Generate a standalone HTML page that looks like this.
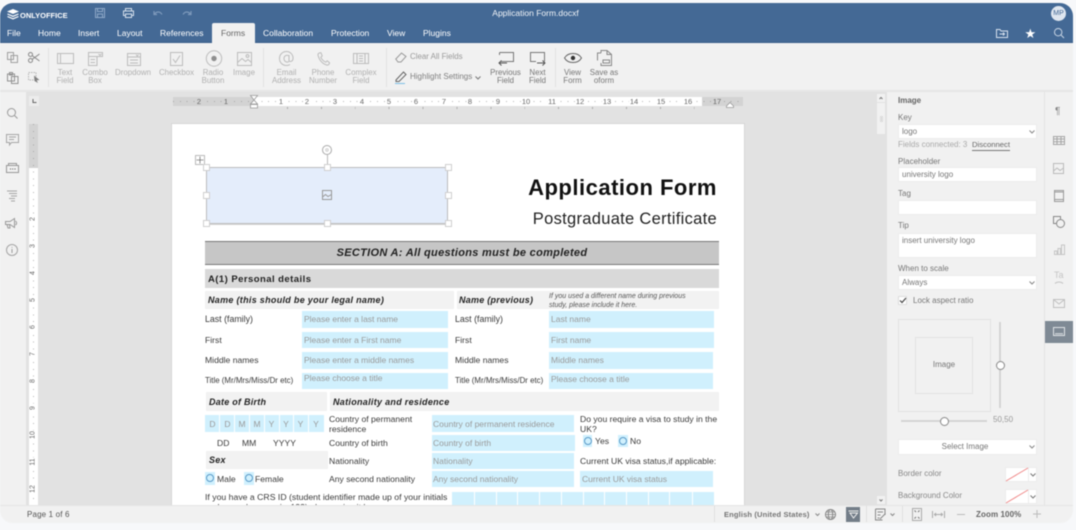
<!DOCTYPE html>
<html lang="en">
<head>
<meta charset="utf-8">
<title>Application Form.docxf</title>
<style>
*{box-sizing:border-box}
html,body{margin:0;padding:0;width:1076px;height:530px;overflow:hidden;background:#f7f8fa}
body{font-family:"Liberation Sans",sans-serif;position:relative}
#root{position:absolute;left:0;top:0;width:1076px;height:530px;overflow:hidden;filter:blur(.5px)}
#win{position:absolute;left:0;top:3px;width:1073px;height:520px;border-radius:13px;overflow:hidden;background:#f1f1f1}
.a{position:absolute}
.t{position:absolute;white-space:nowrap;line-height:1}
.c{transform:translateX(-50%);text-align:center}
svg{position:absolute;overflow:visible;fill:none;stroke-width:1}
.m{color:#fff;font-size:8.5px;top:26px}
.tb{color:#b0b0b0;font-size:7.9px;line-height:8px;white-space:normal;text-align:center;position:absolute;transform:translateX(-50%)}
.tbd{color:#777}
.ic{stroke:#bcbcbc}
.rn{position:absolute;top:1px;font-size:7.5px;line-height:9px;color:#666;transform:translateX(-50%)}
.vn{position:absolute;left:0;width:9px;text-align:center;font-size:7px;line-height:8px;color:#666;transform:rotate(-90deg)}
.f{position:absolute;background:#d0f0fd}
.ft{position:absolute;white-space:nowrap;line-height:1;font-size:8.5px;color:#9a9a9a}
.l{position:absolute;white-space:nowrap;line-height:1;font-size:8.6px;color:#3a3a3a}
.g{position:absolute;background:#f2f2f2}
.bi{position:absolute;white-space:nowrap;line-height:1;font-weight:bold;font-style:italic;font-size:9px;color:#222;letter-spacing:.25px}
.h{position:absolute;width:7px;height:7px;background:#fff;border:1px solid #cfcfcf}
.pl{position:absolute;white-space:nowrap;line-height:1;font-size:8px;color:#777}
.in{position:absolute;left:898px;width:139px;background:#fff;border:1px solid #ececec}
.iv{position:absolute;left:3px;top:3px;font-size:8px;line-height:1;color:#777;white-space:nowrap}
</style>
</head>
<body>
<div id="root">
<div id="win">

<!-- header -->
<div class="a" style="left:0;top:0;width:1073px;height:40px;background:#446995;border-bottom:1px solid #3b5f8a"></div>
<svg style="left:6px;top:5px" width="14" height="12" viewBox="0 0 14 12"><path d="M7 1 L13 3.5 L7 6 L1 3.5Z" fill="#fff"/><path d="M1.5 6 L7 8.3 L12.5 6M1.5 8.5 L7 10.8 L12.5 8.5" stroke="#fff" stroke-width="1.2"/></svg>
<div class="t" style="left:20px;top:9px;color:#fff;font-size:7.5px;font-weight:bold">ONLYOFFICE</div>
<svg style="left:95px;top:5px" width="10" height="10"><path d="M.5.5H9.5V9.5H.5ZM2.5.5V3.5H7.5V.5M2.5 9.5V6H7.5V9.5" stroke="#8fa9c8"/></svg>
<svg style="left:123px;top:5px" width="11" height="10"><path d="M2.5 3V.5H8.5V3M2.5 7.5H.5V3H10.5V7.5H8.5M2.5 6H8.5V9.5H2.5Z" stroke="#d5e0ec"/></svg>
<svg style="left:153px;top:7px" width="10" height="6"><path d="M1 1V4.5H4M1.5 4C3.5 1.5 7 1 9 4.5" stroke="#7d99bb" stroke-width="1.2"/></svg>
<svg style="left:182px;top:7px" width="10" height="6"><path d="M9 1V4.5H6M8.5 4C6.5 1.5 3 1 1 4.5" stroke="#7d99bb" stroke-width="1.2"/></svg>
<div class="t c" style="left:535.5px;top:6px;color:#f1f4f8;font-size:8.5px">Application Form.docxf</div>
<div class="a" style="left:1051px;top:3px;width:15px;height:15px;border-radius:50%;background:#dfe6ef"></div>
<div class="t c" style="left:1058.5px;top:7px;color:#446995;font-size:7px">MP</div>

<div class="t m" style="left:7px">File</div>
<div class="t m" style="left:38px">Home</div>
<div class="t m" style="left:78px">Insert</div>
<div class="t m" style="left:117px">Layout</div>
<div class="t m" style="left:160px">References</div>
<div class="a" style="left:212px;top:20px;width:43px;height:21px;background:#f1f1f1;border-radius:2px 2px 0 0"></div>
<div class="t" style="left:221px;top:26px;font-size:8.5px;color:#666">Forms</div>
<div class="t m" style="left:263px">Collaboration</div>
<div class="t m" style="left:331px">Protection</div>
<div class="t m" style="left:387px">View</div>
<div class="t m" style="left:423px">Plugins</div>
<svg style="left:996px;top:26px" width="12" height="9"><path d="M.5 8.5V.5H4L5 2H11.5V8.5ZM3.5 5H8.5M7 3.5L8.5 5 7 6.5" stroke="#d7e1ee"/></svg>
<div class="t" style="left:1024.5px;top:24px;color:#fff;font-size:13px">★</div>
<svg style="left:1054px;top:25px" width="10" height="10"><circle cx="4.2" cy="4.2" r="3.7" stroke="#c9d6e5"/><path d="M7 7L10 10" stroke="#c9d6e5"/></svg>

<!-- toolbar -->
<div class="a" style="left:0;top:40px;width:1073px;height:48px;background:#f1f1f1;border-bottom:1px solid #e5e5e5"></div>
<svg style="left:7px;top:49px" width="12" height="11"><path d="M.5.5H6.5V7.5H.5ZM4 3.5H10.5V10.5H4Z" stroke="#a0a0a0"/></svg>
<svg style="left:28px;top:49px" width="12" height="11"><circle cx="2.5" cy="2.5" r="2" stroke="#888"/><circle cx="2.5" cy="8.5" r="2" stroke="#888"/><path d="M4 3.5L11.5 9M4 7.5L11.5 2" stroke="#888"/></svg>
<svg style="left:7px;top:69px" width="12" height="12"><path d="M.5 2H7.5V9H.5ZM2.5 .5H5.5V3H2.5ZM4.5 4.5H11V11.5H4.5Z" stroke="#929292"/></svg>
<svg style="left:28px;top:69px" width="12" height="11"><path d="M.5 .5H8V8H.5Z" stroke="#b5b5b5" stroke-dasharray="1.5 1"/><path d="M6 3.5L11.5 8 8.7 8.3 10 11 6.5 9Z" fill="#808080" stroke="none"/></svg>
<div class="a" style="left:48px;top:45px;width:1px;height:39px;background:#e2e2e2"></div>

<svg style="left:57px;top:50px" width="17" height="11"><path d="M.5.5H16.5V10.5H.5ZM3.5.5V10.5M1.5.5H5.5M1.5 10.5H5.5" class="ic"/></svg>
<div class="tb" style="left:65px;top:66px;width:24px">Text<br>Field</div>
<svg style="left:88px;top:49px" width="15" height="14"><path d="M.5 4.5H9V13.5H.5ZM.5 4.5V.5H14.5V4.5H9M2.5 7.5H7M2.5 10.5H7M10.5 2L12 3.3 13.5 2" class="ic"/></svg>
<div class="tb" style="left:95px;top:66px;width:32px">Combo<br>Box</div>
<svg style="left:127px;top:50px" width="14" height="13"><path d="M.5.5H13.5V12.5H.5ZM.5 4H13.5M3 7H11M3 10H11M9 1.7L10.3 3 11.6 1.7" class="ic"/></svg>
<div class="tb" style="left:133px;top:66px;width:44px">Dropdown</div>
<svg style="left:170px;top:49px" width="13" height="14"><path d="M.5.5H12.5V13.5H.5ZM3 7L5.5 10.5 10 3.5" class="ic"/></svg>
<div class="tb" style="left:176.5px;top:66px;width:44px">Checkbox</div>
<svg style="left:206px;top:47px" width="16" height="17"><circle cx="8" cy="8.5" r="7.7" class="ic"/><circle cx="8" cy="8.5" r="2.7" fill="#8f8f8f"/></svg>
<div class="tb" style="left:213px;top:66px;width:32px">Radio<br>Button</div>
<svg style="left:237px;top:49px" width="15" height="14"><path d="M.5.5H14.5V13.5H.5ZM.5 10.5L5 6.5 8.5 9.5 11 7.5 14.5 10.5" class="ic"/><circle cx="10.5" cy="4" r="1.4" class="ic"/></svg>
<div class="tb" style="left:244px;top:66px;width:32px">Image</div>
<div class="a" style="left:263px;top:45px;width:1px;height:39px;background:#e2e2e2"></div>
<svg style="left:279px;top:48px" width="15" height="15"><path d="M10 10.5C8 12 5 10.5 5 7.5S8 3.5 10 5M10 4V9.5C10 11 13.5 11 14 8 14.5 3.5 11 .5 7.5.5 3.5.5.5 3.5.5 7.5S3.5 14.5 7.5 14.5C9 14.5 10 14.2 11 13.5" class="ic"/></svg>
<div class="tb" style="left:286.5px;top:66px;width:34px">Email<br>Address</div>
<svg style="left:317px;top:49px" width="13" height="14"><path d="M1 3C.5 1.5 3 .5 4 .8L5.2 4 3.8 5.3C4.8 7.5 6.5 9.2 8.8 10.2L10.2 8.8 12.5 10.7C12.5 12.2 11 13.5 9.7 13C5.2 11.7 2 7.7 1 3Z" class="ic"/></svg>
<div class="tb" style="left:323px;top:66px;width:34px">Phone<br>Number</div>
<svg style="left:353px;top:50px" width="16" height="11"><path d="M.5.5H15.5V10.5H.5ZM4 .5V10.5M12 .5V10.5M6 3H10M6 5.5H10M6 8H10" class="ic"/></svg>
<div class="tb" style="left:361px;top:66px;width:38px">Complex<br>Field</div>
<div class="a" style="left:386px;top:45px;width:1px;height:39px;background:#e2e2e2"></div>
<svg style="left:395px;top:49px" width="12" height="11"><path d="M.8 7L6.5 1 11 4.5 6 10H3Z" stroke="#999"/></svg>
<div class="t" style="left:410px;top:50px;font-size:7.9px;color:#999">Clear All Fields</div>
<svg style="left:395px;top:68px" width="12" height="14"><path d="M1 9L8.5 1 11 3.5 4 10.5H1Z" stroke="#666"/><path d="M0 12.5H10" stroke="#7dbfe6"/></svg>
<div class="t" style="left:410px;top:70px;font-size:8px;color:#808080">Highlight Settings</div>
<svg style="left:475px;top:73px" width="6" height="4"><path d="M.5.5L3 3 5.5.5" stroke="#777"/></svg>
<svg style="left:498px;top:49px" width="16" height="14"><path d="M1.5 .5H15.5V9.5H3" stroke="#777"/><path d="M1.5 .5V3" stroke="#777"/><path d="M1 11H9M3.5 8.5L1 11 3.5 13.5" stroke="#555"/></svg>
<div class="tb tbd" style="left:505.5px;top:66px;width:36px">Previous<br>Field</div>
<svg style="left:530px;top:49px" width="16" height="14"><path d="M14.5 9.5V.5H.5V9.5H6" stroke="#777"/><path d="M7 11H15M12.5 8.5L15 11 12.5 13.5" stroke="#555"/></svg>
<div class="tb tbd" style="left:537.5px;top:66px;width:30px">Next<br>Field</div>
<div class="a" style="left:555px;top:45px;width:1px;height:39px;background:#e2e2e2"></div>
<svg style="left:564px;top:49px" width="18" height="12"><path d="M.5 6C4 0 14 0 17.5 6 14 12 4 12 .5 6Z" stroke="#666"/><circle cx="9" cy="6" r="2.2" fill="#333"/></svg>
<div class="tb tbd" style="left:572.5px;top:66px;width:30px">View<br>Form</div>
<svg style="left:597px;top:47px" width="15" height="16"><path d="M4 3V.5H10L14.5 4.5V15.5H4V13M10 .5V4.5H14.5M4 3H.5V10.5M6 10H12.5V13H6Z" stroke="#888"/></svg>
<div class="tb tbd" style="left:604px;top:66px;width:36px">Save as<br>oform</div>

<!-- left sidebar -->
<div class="a" style="left:0;top:88px;width:26px;height:414px;background:#f1f1f1"></div>
<svg style="left:7px;top:105px" width="11" height="11"><circle cx="4.5" cy="4.5" r="4" stroke="#999"/><path d="M7.5 7.5L10.5 10.5" stroke="#999"/></svg>
<svg style="left:6px;top:131px" width="13" height="12"><path d="M.5.5H12.5V8.5H5.5L3.5 11V8.5H.5ZM3 3H10M3 5.5H8" stroke="#a5a5a5"/></svg>
<svg style="left:6px;top:160px" width="13" height="11"><path d="M2.5 2.5V.5H10.5V2.5M.5 2.5H12.5V9.5H.5Z" stroke="#989898"/><path d="M4 6H5M6.2 6H7.2M8.5 6H9.5" stroke="#555"/></svg>
<svg style="left:6px;top:187px" width="12" height="12"><path d="M1 1H11M3 3.5H11M5 6H11M3 8.5H9M5 11H9" stroke="#a5a5a5"/></svg>
<svg style="left:5px;top:215px" width="14" height="11"><path d="M.5 3.5H5L9.5.5V9.5L5 6.5H.5Z" stroke="#999"/><path d="M2 6.5L3 10H5L4.5 6.5M10.5 3C12 4 12 6 10.5 7" stroke="#999"/></svg>
<svg style="left:6px;top:241px" width="12" height="12"><circle cx="6" cy="6" r="5.5" stroke="#a5a5a5"/><path d="M6 3V3.8M6 5V9" stroke="#999"/></svg>

<!-- canvas -->
<div class="a" style="left:26px;top:88px;width:847px;height:414px;background:#e2e2e2;overflow:hidden">
<div class="a" style="left:3px;top:5px;width:10px;height:10px;background:#ececec"></div>
<svg style="left:6px;top:8px" width="5" height="5"><path d="M1 0V3.5H4.5" stroke="#666"/></svg>

<div class="a" style="left:147px;top:6px;width:570px;height:9px;background:#d3d3d3">
  <div class="a" style="left:81px;top:0;width:448px;height:9px;background:#fff"></div>
  <div class="a" style="left:0;top:4px;width:570px;height:1px;background:repeating-linear-gradient(90deg,#888 0 1px,transparent 1px 6.8px);opacity:.6"></div>
  <span class="rn" style="left:26px;top:0;background:#d3d3d3;padding:0 1px">2</span><span class="rn" style="left:53px;top:0;background:#d3d3d3;padding:0 1px">1</span>
  <span class="rn" style="left:108px;top:0;background:#fff;padding:0 1px">1</span><span class="rn" style="left:134px;top:0;background:#fff;padding:0 1px">2</span><span class="rn" style="left:162px;top:0;background:#fff;padding:0 1px">3</span><span class="rn" style="left:189px;top:0;background:#fff;padding:0 1px">4</span><span class="rn" style="left:216px;top:0;background:#fff;padding:0 1px">5</span><span class="rn" style="left:243px;top:0;background:#fff;padding:0 1px">6</span><span class="rn" style="left:271px;top:0;background:#fff;padding:0 1px">7</span><span class="rn" style="left:297px;top:0;background:#fff;padding:0 1px">8</span><span class="rn" style="left:325px;top:0;background:#fff;padding:0 1px">9</span><span class="rn" style="left:353px;top:0;background:#fff;padding:0 1px">10</span><span class="rn" style="left:379px;top:0;background:#fff;padding:0 1px">11</span><span class="rn" style="left:407px;top:0;background:#fff;padding:0 1px">12</span><span class="rn" style="left:434px;top:0;background:#fff;padding:0 1px">13</span><span class="rn" style="left:461px;top:0;background:#fff;padding:0 1px">14</span><span class="rn" style="left:488px;top:0;background:#fff;padding:0 1px">15</span><span class="rn" style="left:515px;top:0;background:#fff;padding:0 1px">16</span><span class="rn" style="left:544px;top:0;background:#d3d3d3;padding:0 1px">17</span>
</div>
<div class="a" style="left:228px;top:16px;width:448px;height:2px;background:repeating-linear-gradient(90deg,transparent 0 33px,#aaa 33px 33.9px)"></div>
<svg style="left:224px;top:4px" width="9" height="14"><path d="M.5.5H7.5L4 5ZM4 5L.5 9H7.5ZM.5 9.5H7.5V13H.5Z" fill="#fff" stroke="#999" stroke-width=".8"/></svg>
<svg style="left:700px;top:11px" width="8" height="6"><path d="M4 .5L7.5 4V5.5H.5V4Z" fill="#fff" stroke="#999" stroke-width=".8"/></svg>

<div class="a" style="left:3px;top:33px;width:9px;height:381px;background:#fff">
  <div class="a" style="left:0;top:0;width:9px;height:44px;background:#d3d3d3"></div>
  <div class="a" style="left:4px;top:0;width:1px;height:381px;background:repeating-linear-gradient(180deg,#888 0 1px,transparent 1px 6.8px);opacity:.6"></div>
  <span class="vn" style="top:91px;background:#fff">2</span><span class="vn" style="top:118px;background:#fff">3</span><span class="vn" style="top:145px;background:#fff">4</span><span class="vn" style="top:172px;background:#fff">5</span><span class="vn" style="top:199px;background:#fff">6</span><span class="vn" style="top:226px;background:#fff">7</span><span class="vn" style="top:253px;background:#fff">8</span><span class="vn" style="top:280px;background:#fff">9</span><span class="vn" style="top:307px;background:#fff">10</span><span class="vn" style="top:334px;background:#fff">11</span><span class="vn" style="top:361px;background:#fff">12</span>
</div>
</div>

<!-- page -->
<div class="a" style="left:0;top:88px;width:873px;height:414px;overflow:hidden">
<div class="a" style="left:0;top:-91px;width:873px;height:505px">
<div class="a" style="left:172px;top:124px;width:572px;height:381px;background:#fff;box-shadow:0 0 0 1px #d6d6d6"></div>

<div class="a" style="left:195px;top:155px;width:10px;height:10px;background:#fff;border:1px solid #bbb"></div>
<svg style="left:196px;top:156px" width="8" height="8"><path d="M4 .5V7.5M.5 4H7.5" stroke="#777" stroke-width=".8"/></svg>
<div class="a" style="left:206px;top:167px;width:242px;height:57px;background:#e4edfb;border:1px solid #bdbdbd;box-shadow:0 1px 0 #d5d5d5"></div>
<div class="a" style="left:327px;top:155px;width:1px;height:12px;background:#bbb"></div>
<svg style="left:321px;top:144px" width="12" height="12"><circle cx="6" cy="6" r="4.5" fill="#fff" stroke="#aaa"/><circle cx="6" cy="6" r="1.2" stroke="#ccc"/></svg>
<div class="h" style="left:203px;top:164px"></div><div class="h" style="left:324px;top:164px"></div><div class="h" style="left:445px;top:164px"></div>
<div class="h" style="left:203px;top:192px"></div><div class="h" style="left:445px;top:192px"></div>
<div class="h" style="left:203px;top:220px"></div><div class="h" style="left:324px;top:220px"></div><div class="h" style="left:445px;top:220px"></div>
<svg style="left:322px;top:190px" width="10" height="10"><path d="M.5.5H9.5V9.5H.5ZM.5 7L3.5 4.5 6 6.5 9.5 4.5" stroke="#999"/></svg>

<div class="t" style="right:156px;top:177px;font-size:22px;font-weight:bold;color:#111;letter-spacing:.5px">Application Form</div>
<div class="t" style="right:156px;top:211px;font-size:16.5px;color:#222;letter-spacing:.3px">Postgraduate Certificate</div>

<div class="a" style="left:205px;top:241px;width:514px;height:24px;background:#c6c6c6;border-top:1px solid #777;border-bottom:1px solid #777"></div>
<div class="t c" style="left:462px;top:248px;font-size:11px;font-weight:bold;font-style:italic;color:#222;letter-spacing:.3px">SECTION A: All questions must be completed</div>
<div class="a" style="left:205px;top:269px;width:514px;height:19px;background:#d9d9d9"></div>
<div class="t" style="left:208px;top:275px;font-size:9.5px;font-weight:bold;color:#222;letter-spacing:.45px">A(1) Personal details</div>

<div class="g" style="left:205px;top:291px;width:249px;height:18px"></div>
<div class="g" style="left:457px;top:291px;width:262px;height:18px"></div>
<div class="bi" style="left:208px;top:295.5px;letter-spacing:.3px">Name (this should be your legal name)</div>
<div class="bi" style="left:459px;top:295.5px">Name (previous)</div>
<div class="t" style="left:549px;top:292px;font-size:7px;font-style:italic;line-height:9px;color:#555;white-space:nowrap">If you used a different name during previous<br>study, please include it here.</div>

<div class="l" style="left:205px;top:315px;font-size:8.8px">Last (family)</div>
<div class="f" style="left:302px;top:311px;width:146px;height:17px"></div><div class="ft" style="left:304px;top:315px">Please enter a last name</div>
<div class="l" style="left:455px;top:315px;font-size:8.8px">Last (family)</div>
<div class="f" style="left:549px;top:311px;width:165px;height:17px"></div><div class="ft" style="left:551px;top:315px">Last name</div>

<div class="l" style="left:205px;top:336px">First</div>
<div class="f" style="left:302px;top:332px;width:146px;height:16px"></div><div class="ft" style="left:304px;top:336px">Please enter a First name</div>
<div class="l" style="left:455px;top:336px">First</div>
<div class="f" style="left:549px;top:332px;width:165px;height:16px"></div><div class="ft" style="left:551px;top:336px">First name</div>

<div class="l" style="left:205px;top:356px">Middle names</div>
<div class="f" style="left:302px;top:352px;width:146px;height:17px"></div><div class="ft" style="left:304px;top:356px">Please enter a middle names</div>
<div class="l" style="left:455px;top:356px">Middle names</div>
<div class="f" style="left:549px;top:352px;width:164px;height:17px"></div><div class="ft" style="left:551px;top:356px">Middle names</div>

<div class="l" style="left:205px;top:377px;font-size:7.9px">Title (Mr/Mrs/Miss/Dr etc)</div>
<div class="f" style="left:302px;top:373px;width:146px;height:16px"></div><div class="ft" style="left:304px;top:374px">Please choose a title</div>
<div class="l" style="left:455px;top:377px;font-size:7.9px">Title (Mr/Mrs/Miss/Dr etc)</div>
<div class="f" style="left:549px;top:373px;width:164px;height:16px"></div><div class="ft" style="left:551px;top:375px">Please choose a title</div>

<div class="g" style="left:206px;top:392px;width:121px;height:19px"></div>
<div class="g" style="left:330px;top:392px;width:389px;height:19px"></div>
<div class="bi" style="left:209px;top:398px">Date of Birth</div>
<div class="bi" style="left:333px;top:398px;letter-spacing:.3px">Nationality and residence</div>

<div class="f" style="left:205px;top:415px;width:119px;height:17px"></div>
<div class="a" style="left:219px;top:415px;width:1px;height:17px;background:#fff"></div><div class="a" style="left:234px;top:415px;width:1px;height:17px;background:#fff"></div><div class="a" style="left:249px;top:415px;width:1px;height:17px;background:#fff"></div><div class="a" style="left:264px;top:415px;width:1px;height:17px;background:#fff"></div><div class="a" style="left:279px;top:415px;width:1px;height:17px;background:#fff"></div><div class="a" style="left:293px;top:415px;width:1px;height:17px;background:#fff"></div><div class="a" style="left:308px;top:415px;width:1px;height:17px;background:#fff"></div>
<div class="ft c" style="left:212.5px;top:420px">D</div><div class="ft c" style="left:227.5px;top:420px">D</div><div class="ft c" style="left:242px;top:420px">M</div><div class="ft c" style="left:257px;top:420px">M</div><div class="ft c" style="left:271.5px;top:420px">Y</div><div class="ft c" style="left:286px;top:420px">Y</div><div class="ft c" style="left:300.5px;top:420px">Y</div><div class="ft c" style="left:316px;top:420px">Y</div>
<div class="l" style="left:217px;top:439px">DD</div><div class="l" style="left:242px;top:439px">MM</div><div class="l" style="left:273px;top:439px">YYYY</div>
<div class="g" style="left:206px;top:451px;width:122px;height:18px"></div>
<div class="bi" style="left:209px;top:456px">Sex</div>
<div class="f" style="left:205px;top:472px;width:10px;height:13px"></div><div class="a" style="left:206px;top:474px;width:8px;height:8px;border:1px solid #5a9ac8;border-radius:50%"></div>
<div class="l" style="left:217px;top:475px">Male</div>
<div class="f" style="left:244px;top:472px;width:10px;height:13px"></div><div class="a" style="left:245px;top:474px;width:8px;height:8px;border:1px solid #5a9ac8;border-radius:50%"></div>
<div class="l" style="left:255px;top:475px">Female</div>

<div class="l" style="left:329px;top:415px;line-height:9.5px">Country of permanent<br>residence</div>
<div class="f" style="left:432px;top:415px;width:142px;height:17px"></div><div class="ft" style="left:433px;top:420px">Country of permanent residence</div>
<div class="l" style="left:329px;top:439px">Country of birth</div>
<div class="f" style="left:432px;top:435px;width:143px;height:16px"></div><div class="ft" style="left:433px;top:439px">Country of birth</div>
<div class="l" style="left:329px;top:457px">Nationality</div>
<div class="f" style="left:432px;top:453px;width:142px;height:16px"></div><div class="ft" style="left:433px;top:457px">Nationality</div>
<div class="l" style="left:329px;top:475px">Any second nationality</div>
<div class="f" style="left:432px;top:471px;width:142px;height:16px"></div><div class="ft" style="left:433px;top:475px">Any second nationality</div>

<div class="l" style="left:580px;top:415px;line-height:9.5px">Do you require a visa to study in the<br>UK?</div>
<div class="f" style="left:583px;top:435px;width:9px;height:12px"></div><div class="a" style="left:583.5px;top:437px;width:8px;height:8px;border:1px solid #5a9ac8;border-radius:50%"></div>
<div class="l" style="left:595px;top:437px">Yes</div>
<div class="f" style="left:618px;top:435px;width:10px;height:12px"></div><div class="a" style="left:619px;top:437px;width:8px;height:8px;border:1px solid #5a9ac8;border-radius:50%"></div>
<div class="l" style="left:630px;top:437px">No</div>
<div class="l" style="left:580px;top:457px">Current UK visa status,if applicable:</div>
<div class="f" style="left:580px;top:471px;width:133px;height:16px"></div><div class="ft" style="left:582px;top:475px">Current UK visa status</div>

<div class="a" style="left:205px;top:492px;width:245px;height:13px;overflow:hidden"><div class="l" style="left:0;top:1px;line-height:9.5px;font-size:8.7px">If you have a CRS ID (student identifier made up of your initials<br>and a number, e.g. jcs123) please give it here.</div></div>
<div class="f" style="left:452px;top:492px;width:262px;height:13px"></div>
<div class="a" style="left:474px;top:492px;width:1px;height:13px;background:#fff"></div><div class="a" style="left:496px;top:492px;width:1px;height:13px;background:#fff"></div><div class="a" style="left:517px;top:492px;width:1px;height:13px;background:#fff"></div><div class="a" style="left:539px;top:492px;width:1px;height:13px;background:#fff"></div><div class="a" style="left:561px;top:492px;width:1px;height:13px;background:#fff"></div><div class="a" style="left:583px;top:492px;width:1px;height:13px;background:#fff"></div><div class="a" style="left:604px;top:492px;width:1px;height:13px;background:#fff"></div><div class="a" style="left:626px;top:492px;width:1px;height:13px;background:#fff"></div><div class="a" style="left:648px;top:492px;width:1px;height:13px;background:#fff"></div><div class="a" style="left:669px;top:492px;width:1px;height:13px;background:#fff"></div><div class="a" style="left:692px;top:492px;width:1px;height:13px;background:#fff"></div>
</div>
</div>

<!-- scrollbar -->
<div class="a" style="left:873px;top:88px;width:14px;height:414px;background:#e2e2e2"></div>
<div class="a" style="left:877px;top:91px;width:8px;height:8px;background:#f1f1f1"></div>
<svg style="left:879px;top:94px" width="4" height="3"><path d="M.5 2L2 .5 3.5 2" stroke="#777"/></svg>
<div class="a" style="left:877px;top:100px;width:8px;height:31px;background:#f1f1f1"></div>
<div class="a" style="left:880px;top:113px;width:3px;height:6px;background:#ddd"></div>
<div class="a" style="left:877px;top:493px;width:8px;height:8px;background:#f1f1f1"></div>
<svg style="left:879px;top:496px" width="4" height="3"><path d="M.5 .5L2 2 3.5 .5" stroke="#777"/></svg>

<!-- right panel -->
<div class="a" style="left:887px;top:88px;width:186px;height:414px;background:#f1f1f1"></div>
<div class="a" style="left:1044px;top:88px;width:1px;height:414px;background:#e4e4e4"></div>
<div class="a" style="left:0;top:88px;width:1073px;height:1px;background:#e6e6e6"></div>

<div style="position:absolute;left:0;top:-3px;width:1073px;height:523px">
<div class="pl" style="left:898px;top:97px;font-weight:bold;color:#666">Image</div>
<div class="pl" style="left:898px;top:114px">Key</div>
<div class="in" style="top:124px;height:15px"><span class="iv">logo</span></div>
<svg style="left:1029px;top:130px" width="6" height="4"><path d="M.5.5L3 3 5.5.5" stroke="#888"/></svg>
<div class="pl" style="left:898px;top:141px;color:#aaa">Fields connected: 3</div>
<div class="pl" style="left:972px;top:141px;color:#666;font-size:7.7px;border-bottom:1px solid #777;padding-bottom:1px">Disconnect</div>
<div class="pl" style="left:898px;top:158px">Placeholder</div>
<div class="in" style="top:167px;height:15px"><span class="iv">university logo</span></div>
<div class="pl" style="left:898px;top:190px">Tag</div>
<div class="in" style="top:200px;height:15px"></div>
<div class="pl" style="left:898px;top:222px">Tip</div>
<div class="in" style="top:233px;height:25px"><span class="iv">insert university logo</span></div>
<div class="pl" style="left:898px;top:265px">When to scale</div>
<div class="in" style="top:275px;height:15px"><span class="iv">Always</span></div>
<svg style="left:1029px;top:281px" width="6" height="4"><path d="M.5.5L3 3 5.5.5" stroke="#888"/></svg>
<div class="a" style="left:898px;top:296px;width:9px;height:9px;background:#fff;border:1px solid #ddd"></div>
<svg style="left:899px;top:297px" width="8" height="7"><path d="M1 3.5L3 5.5 7 1" stroke="#444" stroke-width="1.2"/></svg>
<div class="pl" style="left:913px;top:297px">Lock aspect ratio</div>

<div class="a" style="left:898px;top:319px;width:93px;height:93px;border:1px solid #e2e2e2"></div>
<div class="a" style="left:915px;top:337px;width:58px;height:57px;border:1px solid #e2e2e2"></div>
<div class="pl c" style="left:944px;top:361px">Image</div>
<div class="a" style="left:999px;top:322px;width:2px;height:86px;background:#d5d5d5"></div>
<div class="a" style="left:996px;top:361px;width:9px;height:9px;border-radius:50%;background:#fff;border:1px solid #888"></div>
<div class="a" style="left:901px;top:420px;width:86px;height:2px;background:#d5d5d5"></div>
<div class="a" style="left:940px;top:417px;width:9px;height:9px;border-radius:50%;background:#fff;border:1px solid #888"></div>
<div class="pl" style="left:993px;top:416px;color:#999">50,50</div>
<div class="in" style="top:439px;height:16px"></div>
<div class="pl c" style="left:965px;top:443px">Select Image</div>
<svg style="left:1029px;top:445px" width="6" height="4"><path d="M.5.5L3 3 5.5.5" stroke="#888"/></svg>

<div class="pl" style="left:898px;top:470px;color:#888">Border color</div>
<div class="a" style="left:1005px;top:467px;width:32px;height:15px;background:#fff;border:1px solid #ececec"></div>
<div class="a" style="left:1028px;top:467px;width:1px;height:15px;background:#ececec"></div>
<svg style="left:1006px;top:468px" width="22" height="13"><path d="M0 13L22 0" stroke="#f08a8a"/></svg>
<svg style="left:1030px;top:473px" width="6" height="4"><path d="M.5.5L3 3 5.5.5" stroke="#777"/></svg>
<div class="pl" style="left:898px;top:492px;color:#888">Background Color</div>
<div class="a" style="left:1005px;top:489px;width:32px;height:15px;background:#fff;border:1px solid #ececec"></div>
<div class="a" style="left:1028px;top:489px;width:1px;height:15px;background:#ececec"></div>
<svg style="left:1006px;top:490px" width="22" height="13"><path d="M0 13L22 0" stroke="#f08a8a"/></svg>
<svg style="left:1030px;top:495px" width="6" height="4"><path d="M.5.5L3 3 5.5.5" stroke="#777"/></svg>

<div class="t" style="left:1055px;top:107px;font-size:10px;color:#888">¶</div>
<svg style="left:1053px;top:136px" width="12" height="9"><path d="M.5.5H11.5V8.5H.5ZM.5 3H11.5M.5 5.7H11.5M4 .5V8.5M8 .5V8.5" stroke="#a5a5a5"/></svg>
<svg style="left:1053px;top:163px" width="11" height="11"><path d="M.5.5H10.5V10.5H.5ZM.5 8L4 5 7 7.5 10.5 5" stroke="#bbb"/></svg>
<svg style="left:1054px;top:190px" width="10" height="12"><path d="M.5.5H9.5V11.5H.5ZM.5 2H9.5M.5 9.5H9.5" stroke="#999"/></svg>
<svg style="left:1053px;top:216px" width="12" height="12"><path d="M4 7.5H.5V.5H7.5V4" stroke="#888"/><circle cx="7.5" cy="7.5" r="4" stroke="#888"/></svg>
<svg style="left:1054px;top:244px" width="11" height="11"><path d="M.5 10.5V7H3V10.5ZM4 10.5V4.5H6.5V10.5ZM7.5 10.5V1H10.5V10.5Z" stroke="#c5c5c5"/></svg>
<div class="t" style="left:1054px;top:271px;font-size:9px;color:#c5c5c5">Ta</div>
<svg style="left:1054px;top:281px" width="10" height="3"><path d="M1 2.5C3 .5 7 .5 9 2.5" stroke="#c5c5c5"/></svg>
<svg style="left:1053px;top:299px" width="12" height="9"><path d="M.5.5H11.5V8.5H.5ZM.5.5L6 5 11.5.5" stroke="#c0c0c0"/></svg>
<div class="a" style="left:1045px;top:321px;width:28px;height:22px;background:#7f8a95"></div>
<svg style="left:1053px;top:327px" width="12" height="9"><path d="M.5.5H11.5V8.5H.5Z" stroke="#dfe3e6"/><path d="M2 6.8H10" stroke="#dfe3e6"/></svg>
</div>

<!-- status bar -->
<div class="a" style="left:0;top:502px;width:1073px;height:18px;background:#f1f1f1;border-top:1px solid #e5e5e5"></div>
<div style="position:absolute;left:0;top:-3px;width:1073px;height:523px">
<div class="t" style="left:27px;top:510.5px;font-size:8px;color:#555;letter-spacing:.15px">Page 1 of 6</div>
<div class="a" style="left:714px;top:506px;width:1px;height:16px;background:#e0e0e0"></div>
<div class="t" style="left:724px;top:510.5px;font-size:7.5px;color:#555;letter-spacing:.15px;font-weight:bold;opacity:.8">English (United States)</div>
<svg style="left:815px;top:513px" width="5" height="3"><path d="M.5.5L2.5 2.5 4.5.5" stroke="#888"/></svg>
<svg style="left:825px;top:509px" width="11" height="11"><circle cx="5.5" cy="5.5" r="5" stroke="#888"/><ellipse cx="5.5" cy="5.5" rx="2.2" ry="5" stroke="#888"/><path d="M.5 5.5H10.5M1.5 3H9.5M1.5 8H9.5" stroke="#888" stroke-width=".7"/></svg>
<div class="a" style="left:846px;top:507px;width:14px;height:15px;background:#737d88"></div>
<svg style="left:847.5px;top:510px" width="11" height="9"><path d="M.5 1H10.5M2 3H9.5L5.5 8Z" stroke="#eee"/></svg>
<div class="a" style="left:866px;top:506px;width:1px;height:16px;background:#e0e0e0"></div>
<svg style="left:875px;top:508px" width="11" height="13"><path d="M.5 1H10V7M.5 1V12H7.5M2.5 4H8M2.5 7H5.5M2.5 10H4.5M5 11L10.5 5.5" stroke="#888"/></svg>
<svg style="left:890px;top:513px" width="5" height="3"><path d="M.5.5L2.5 2.5 4.5.5" stroke="#888"/></svg>
<div class="a" style="left:902px;top:506px;width:1px;height:16px;background:#e0e0e0"></div>
<svg style="left:912px;top:508px" width="10" height="13"><path d="M.5.5H9.5V12.5H.5Z" stroke="#aaa"/><path d="M2.5 2.5L4 4M7.5 2.5L6 4M2.5 10.5L4 9M7.5 10.5L6 9" stroke="#777"/></svg>
<svg style="left:932px;top:510px" width="13" height="9"><path d="M.5 1V8M12.5 1V8M3 4.5H10M4 3L2.5 4.5 4 6M9 3L10.5 4.5 9 6" stroke="#aaa"/></svg>
<svg style="left:957px;top:514px" width="8" height="2"><path d="M0 .5H8" stroke="#bbb"/></svg>
<div class="t" style="left:976px;top:510.5px;font-size:8px;font-weight:bold;color:#666;letter-spacing:.1px">Zoom 100%</div>
<svg style="left:1033px;top:510px" width="8" height="8"><path d="M0 4H8M4 0V8" stroke="#bbb"/></svg>
</div>

</div>
</div>
</body>
</html>
